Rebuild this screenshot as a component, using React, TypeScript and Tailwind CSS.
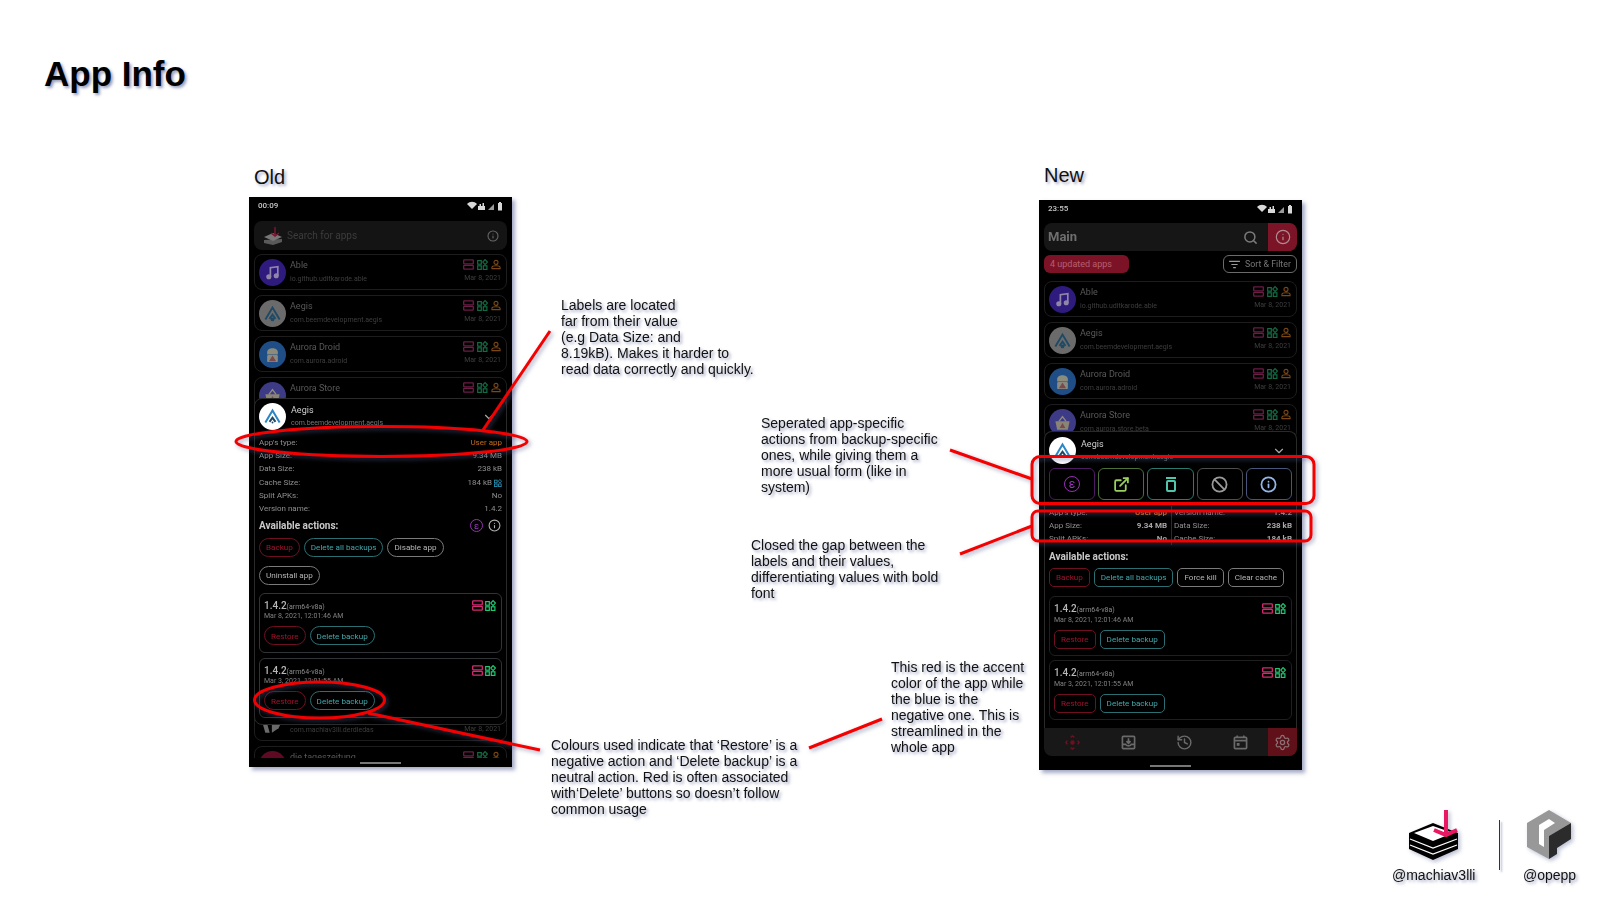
import {ReactNode} from "react";
import {Ban, ChevronDown, ExternalLink, History, Info, Search, Settings} from "lucide-react";

type Tone = "red" | "teal" | "gray";

const toneClass: Record<Tone, string> = {
  red: "border-[#6e1022] text-[#a3122e]",
  teal: "border-[#2b6f73] text-[#45a7ab]",
  gray: "border-[#7a7a7a] text-[#b5b5b5]",
};

function Storage({className}: {className: string}) {
  return (
    <svg viewBox="0 0 11 11" className={`w-[11px] h-[11px] ${className}`} fill="none" stroke="currentColor" strokeWidth="1.3">
      <rect x="0.7" y="0.9" width="9.6" height="3.9" rx="0.6" />
      <rect x="0.7" y="6.3" width="9.6" height="3.9" rx="0.6" />
    </svg>
  );
}

function Apps({className, size = "w-[11px] h-[11px]"}: {className: string; size?: string}) {
  return (
    <svg viewBox="0 0 11 11" className={`${size} ${className}`} fill="none" stroke="currentColor" strokeWidth="1.2">
      <rect x="0.7" y="1.6" width="3.6" height="3.6" />
      <rect x="0.7" y="6.8" width="3.6" height="3.6" />
      <rect x="6.3" y="6.8" width="3.6" height="3.6" />
      <path d="M8.1 0.6 L10.4 3.1 L8.1 5.6 L5.8 3.1 Z" />
    </svg>
  );
}

function Person({className}: {className: string}) {
  return (
    <svg viewBox="0 0 11 11" className={`w-[10px] h-[11px] ${className}`} fill="none" stroke="currentColor" strokeWidth="1.2">
      <circle cx="5.5" cy="3.2" r="2.2" />
      <path d="M1 10 V8.8 C1 7.4 3.5 6.9 5.5 6.9 C7.5 6.9 10 7.4 10 8.8 V10 Z" />
    </svg>
  );
}

function StatusBar({time}: {time: string}) {
  return (
    <div className="h-[16px] pt-[2px] px-[9px] flex items-center justify-between shrink-0">
      <span className="text-[8px] font-medium text-[#c8c8c8]">{time}</span>
      <svg viewBox="0 0 36 10" className="w-[36px] h-[10px]" fill="#d8d8d8">
        <path d="M0 3 C3 0 7 0 10 3 L5 8 Z" />
        <path d="M11 9 V5 H12.5 V3 H14 V5 H15.5 V2 H17 V5 H18 V9 Z" />
        <path d="M21 9 L27 3 V9 Z" fill="#9a9a9a" />
        <path d="M31 2 H32 V1 H34 V2 H35 V9.5 H31 Z" />
      </svg>
    </div>
  );
}

function AppIcon({kind}: {kind: string}) {
  if (kind === "able") {
    return (
      <div className="w-[27px] h-[27px] rounded-full bg-[#2f1a7e] flex items-center justify-center shrink-0">
        <svg viewBox="0 0 16 16" className="w-[17px] h-[17px]" fill="none" stroke="#8f86a8" strokeWidth="1.6">
          <path d="M6 12 V3.5 L13 2.5 V11" />
          <circle cx="4.5" cy="12" r="1.6" fill="#8f86a8" />
          <circle cx="11.5" cy="11" r="1.6" fill="#8f86a8" />
        </svg>
      </div>
    );
  }
  if (kind === "aegis") {
    return (
      <div className="w-[27px] h-[27px] rounded-full bg-[#6b6b6b] flex items-center justify-center shrink-0">
        <svg viewBox="0 0 16 16" className="w-[19px] h-[19px]" fill="none" stroke="#1f4a66" strokeWidth="1.6">
          <path d="M2 13 L8 3 L14 13" />
          <path d="M5.5 12.5 L8 9 L10.5 12.5" />
          <circle cx="8" cy="13" r="0.8" fill="#1f4a66" />
        </svg>
      </div>
    );
  }
  if (kind === "droid") {
    return (
      <div className="w-[27px] h-[27px] rounded-full bg-[#1f4d85] flex items-center justify-center shrink-0">
        <svg viewBox="0 0 16 16" className="w-[19px] h-[19px]">
          <path d="M3.5 8 V6 C3.5 1.6 12.5 1.6 12.5 6 V8 Z" fill="#8c8c7c" />
          <rect x="3.5" y="8.4" width="9" height="6" rx="1" fill="#8a8a80" />
          <path d="M8 8.8 L11 13.6 H5 Z" fill="#7a4a4a" />
        </svg>
      </div>
    );
  }
  if (kind === "store") {
    return (
      <div className="w-[27px] h-[27px] rounded-full bg-[#3d3a86] flex items-center justify-center shrink-0">
        <svg viewBox="0 0 16 16" className="w-[19px] h-[19px]">
          <path d="M5 7 L8 3 L11 7" fill="none" stroke="#8d8a80" strokeWidth="1.2" />
          <path d="M2 7 H14 L12.5 14 H3.5 Z" fill="#8a8474" />
          <path d="M8 8.4 L10.4 12.6 H5.6 Z" fill="#7a4a4a" />
        </svg>
      </div>
    );
  }
  if (kind === "tag") {
    return <div className="w-[27px] h-[27px] rounded-full bg-[#5e0a22] shrink-0" />;
  }
  return (
    <div className="w-[27px] h-[27px] flex items-end justify-center pb-[3px] shrink-0">
      <svg viewBox="0 0 20 16" className="w-[22px] h-[18px]" fill="#6a6a6a">
        <path d="M1 8 L5 8 L7 15 L3 15 Z" />
        <path d="M9 15 L9 6 L19 3 L15 11 Z" />
      </svg>
    </div>
  );
}

function AppRow({name, pkg, kind, date = "Mar 8, 2021"}: {name: string; pkg: string; kind: string; date?: string}) {
  return (
    <div className="h-[36px] mx-[5px] mb-[5px] pl-[4px] pr-[5px] shrink-0 flex items-center gap-[4px] rounded-lg border border-[#1d1d1d]">
      <AppIcon kind={kind} />
      <div className="flex-1 min-w-0 flex flex-col gap-[5px] pb-[1px]">
        <span className="text-[9px] leading-[10px] text-[#595959]">{name}</span>
        <span className="text-[7px] leading-[9px] text-[#3e3e3e]">{pkg}</span>
      </div>
      <div className="flex flex-col items-end gap-[4px] pb-[2px]">
        <div className="flex items-center gap-[3px]">
          <Storage className="text-[#6b1d45]" />
          <Apps className="text-[#126b42]" />
          <Person className="text-[#7a4715]" />
        </div>
        <span className="text-[7px] leading-[9px] text-[#3e3e3e]">{date}</span>
      </div>
    </div>
  );
}

function Pill({tone, square, children}: {tone: Tone; square?: boolean; children: ReactNode}) {
  return (
    <span className={`h-[19px] px-[6px] flex items-center border text-[8.1px] leading-none whitespace-nowrap ${square ? "rounded-[5px]" : "rounded-full"} ${toneClass[tone]}`}>
      {children}
    </span>
  );
}

function SheetHeader() {
  return (
    <div className="flex items-center gap-[5px]">
      <div className="w-[27px] h-[27px] rounded-full bg-white flex items-center justify-center shrink-0">
        <svg viewBox="0 0 16 16" className="w-[19px] h-[19px]" fill="none" stroke="#2a86c4" strokeWidth="1.7">
          <path d="M2 13 L8 3 L14 13" />
          <path d="M5.5 12.5 L8 9 L10.5 12.5" stroke="#1f4a66" />
          <circle cx="8" cy="13" r="0.8" fill="#1f4a66" stroke="none" />
        </svg>
      </div>
      <div className="flex-1 flex flex-col gap-[4px]">
        <span className="text-[9px] leading-[10px] text-[#d0d0d0]">Aegis</span>
        <span className="text-[7px] leading-[9px] text-[#777777]">com.beemdevelopment.aegis</span>
      </div>
      <ChevronDown className="w-[14px] h-[14px] text-[#aaaaaa] mr-[6px]" strokeWidth={2} />
    </div>
  );
}

function BackupCard({date, shape, border}: {date: string; shape: boolean; border: string}) {
  return (
    <div className={`h-[60px] rounded-md border px-[4px] pt-[6px] ${border}`}>
      <div className="flex justify-between items-start">
        <div className="flex items-baseline">
          <span className="text-[10px] leading-[12px] font-medium text-[#b8b8b8]">1.4.2</span>
          <span className="text-[7px] text-[#8a8a8a]">(arm64-v8a)</span>
        </div>
        <div className="flex gap-[2px] pr-[1px]">
          <Storage className="text-[#d12c72]" />
          <Apps className="text-[#1fc770]" />
        </div>
      </div>
      <div className="text-[7px] leading-[9px] text-[#808080]">{date}</div>
      <div className="flex gap-[4px] mt-[5px]">
        <Pill tone="red" square={shape}>Restore</Pill>
        <Pill tone="teal" square={shape}>Delete backup</Pill>
      </div>
    </div>
  );
}

function InfoRow({label, value, valueClass, height}: {label: string; value: ReactNode; valueClass: string; height: string}) {
  return (
    <div className={`flex justify-between items-center text-[8px] ${height}`}>
      <span className="text-[#8f8f8f]">{label}</span>
      <span className={valueClass}>{value}</span>
    </div>
  );
}

function OldPhone() {
  const rowH = "h-[13.3px]";
  return (
    <div className="absolute left-[249px] top-[197px] w-[263px] h-[570px] bg-black flex flex-col shadow-[3px_3px_4px_rgba(90,100,150,0.55)] font-['Roboto',sans-serif] blur-[0.4px]">
      <StatusBar time="00:09" />
      <div className="h-[29px] mx-[5px] mt-[8px] mb-[4px] pl-[9px] pr-[8px] shrink-0 flex items-center gap-[4px] rounded-lg bg-[#141414]">
        <svg viewBox="0 0 20 18" className="w-[20px] h-[18px]" fill="none">
          <path d="M1 13 V16 L10 18 L19 15 V12 Z" fill="#5a5a5a" />
          <path d="M1 10 L10 6 L19 10 L10 14 Z" fill="#777777" />
          <path d="M12 0 V8 M8 6 L12 9 L16 6" stroke="#7a1530" strokeWidth="1.5" />
        </svg>
        <span className="flex-1 text-[10px] text-[#3c3c3c]">Search for apps</span>
        <Info className="w-[12px] h-[12px] text-[#666666]" strokeWidth={2.2} />
      </div>
      <div className="flex-1 overflow-hidden flex flex-col">
        <AppRow name="Able" pkg="io.github.uditkarode.able" kind="able" />
        <AppRow name="Aegis" pkg="com.beemdevelopment.aegis" kind="aegis" />
        <AppRow name="Aurora Droid" pkg="com.aurora.adroid" kind="droid" />
        <AppRow name="Aurora Store" pkg="com.aurora.store.beta" kind="store" />
        <div className="h-[287px] shrink-0" />
        <AppRow name="Der Die Das" pkg="com.machiav3lli.derdiedas" kind="das" />
        <AppRow name="die tageszeitung" pkg="de.taz.app.android" kind="tag" />
      </div>
      <div className="h-[9px] flex items-end justify-center pb-[3px] shrink-0">
        <div className="w-[41px] h-[2px] bg-[#777777]" />
      </div>
      <div className="absolute left-[5px] right-[5px] top-[201px] h-[327px] px-[4px] pt-[4px] bg-black border border-[#2a2a2a] rounded-lg">
        <SheetHeader />
        <div className="mt-[6px]">
          <InfoRow height={rowH} label="App's type:" value="User app" valueClass="text-[#c56a1c]" />
          <InfoRow height={rowH} label="App Size:" value="9.34 MB" valueClass="text-[#8f8f8f]" />
          <InfoRow height={rowH} label="Data Size:" value="238 kB" valueClass="text-[#8f8f8f]" />
          <InfoRow
            height={rowH}
            label="Cache Size:"
            value={<span className="flex items-center gap-[2px]">184 kB<Apps className="text-[#2a8fb0]" size="w-[8px] h-[8px]" /></span>}
            valueClass="text-[#8f8f8f]"
          />
          <InfoRow height={rowH} label="Split APKs:" value="No" valueClass="text-[#8f8f8f]" />
          <InfoRow height={rowH} label="Version name:" value="1.4.2" valueClass="text-[#8f8f8f]" />
        </div>
        <div className="flex items-center mt-[3px] h-[14px]">
          <span className="flex-1 text-[10px] font-bold text-[#c8c8c8]">Available actions:</span>
          <span className="w-[13px] h-[13px] rounded-full border border-[#9a2fb8] flex items-center justify-center text-[9.5px] leading-none text-[#a032c0] mr-[5px]">ε</span>
          <Info className="w-[13px] h-[13px] text-[#b0b0b0] mr-[1px]" strokeWidth={2} />
        </div>
        <div className="flex flex-wrap gap-x-[4px] gap-y-[9px] mt-[5px]">
          <Pill tone="red">Backup</Pill>
          <Pill tone="teal">Delete all backups</Pill>
          <Pill tone="gray">Disable app</Pill>
          <Pill tone="gray">Uninstall app</Pill>
        </div>
        <div className="flex flex-col gap-[5px] mt-[8px]">
          <BackupCard date="Mar 8, 2021, 12:01:46 AM" shape={false} border="border-[#303338]" />
          <BackupCard date="Mar 3, 2021, 12:01:55 AM" shape={false} border="border-[#303338]" />
        </div>
      </div>
    </div>
  );
}

function ActionButton({border, children}: {border: string; children: ReactNode}) {
  return <div className={`flex-1 h-[32px] rounded-md border flex items-center justify-center ${border}`}>{children}</div>;
}

function NewPhone() {
  const rowH = "h-[13px]";
  return (
    <div className="absolute left-[1039px] top-[200px] w-[263px] h-[570px] bg-black flex flex-col shadow-[3px_3px_4px_rgba(90,100,150,0.55)] font-['Roboto',sans-serif] blur-[0.4px]">
      <StatusBar time="23:55" />
      <div className="h-[28px] mx-[5px] mt-[7px] pl-[4px] shrink-0 flex items-center rounded-lg bg-[#161616] overflow-hidden">
        <span className="flex-1 text-[13px] font-bold text-[#6f6f6f]">Main</span>
        <Search className="w-[15px] h-[15px] text-[#7a7a7a] mr-[10px]" strokeWidth={2.4} />
        <div className="w-[29px] h-full bg-[#7a1426] flex items-center justify-center">
          <Info className="w-[16px] h-[16px] text-[#b08a8e]" strokeWidth={1.8} />
        </div>
      </div>
      <div className="h-[18px] mx-[5px] mt-[4px] shrink-0 flex justify-between">
        <div className="w-[85px] pt-[1px] rounded-md bg-[#7c1226] flex items-center pl-[6px] text-[9px] text-[#b5606e]">4 updated apps</div>
        <div className="w-[74px] pt-[1px] rounded-md border border-[#6b6b6b] flex items-center justify-center gap-[5px] text-[8.8px] text-[#777777]">
          <svg viewBox="0 0 12 10" className="w-[11px] h-[9px]" stroke="#9a9a9a" strokeWidth="1.2">
            <path d="M0 1.5 H12 M2.5 5 H9.5 M4.5 8.5 H7.5" />
          </svg>
          Sort &amp; Filter
        </div>
      </div>
      <div className="flex-1 overflow-hidden flex flex-col pt-[8px]">
        <AppRow name="Able" pkg="io.github.uditkarode.able" kind="able" />
        <AppRow name="Aegis" pkg="com.beemdevelopment.aegis" kind="aegis" />
        <AppRow name="Aurora Droid" pkg="com.aurora.adroid" kind="droid" />
        <AppRow name="Aurora Store" pkg="com.aurora.store.beta" kind="store" />
      </div>
      <div className="h-[28px] mx-[5px] shrink-0 flex items-center rounded-b-lg bg-[#181818] overflow-hidden">
        <div className="flex-1 flex justify-center">
          <svg viewBox="0 0 16 16" className="w-[15px] h-[15px]" fill="none" stroke="#6e1022" strokeWidth="1.6">
            <circle cx="8" cy="8" r="1.6" fill="#6e1022" />
            <path d="M6 2.5 L8 1 L10 2.5 M6 13.5 L8 15 L10 13.5 M2.5 6 L1 8 L2.5 10 M13.5 6 L15 8 L13.5 10" />
          </svg>
        </div>
        <div className="flex-1 flex justify-center">
          <svg viewBox="0 0 16 16" className="w-[15px] h-[15px]" fill="none" stroke="#6a6a6a" strokeWidth="1.8">
            <rect x="1.5" y="1.5" width="13" height="13" rx="1" />
            <path d="M1.5 10 H5 C5.5 12 10.5 12 11 10 H14.5 M8 3.5 V8.5 M5.8 6.5 L8 8.8 L10.2 6.5" />
          </svg>
        </div>
        <div className="flex-1 flex justify-center">
          <History className="w-[17px] h-[17px] text-[#6a6a6a]" strokeWidth={2} />
        </div>
        <div className="flex-1 flex justify-center">
          <svg viewBox="0 0 16 16" className="w-[15px] h-[15px]" fill="none" stroke="#6a6a6a" strokeWidth="1.8">
            <rect x="1.5" y="2.5" width="13" height="12" rx="1" />
            <path d="M1.5 6 H14.5 M4.5 0.5 V3 M11.5 0.5 V3" />
            <rect x="4" y="8.5" width="3" height="3" fill="#6a6a6a" stroke="none" />
          </svg>
        </div>
        <div className="w-[29px] h-full bg-[#5f1019] flex items-center justify-center">
          <Settings className="w-[17px] h-[17px] text-[#8a7074]" strokeWidth={1.8} />
        </div>
      </div>
      <div className="h-[14px] flex items-end justify-center pb-[3px] shrink-0">
        <div className="w-[41px] h-[2px] bg-[#777777]" />
      </div>
      <div className="absolute left-[5px] right-[5px] top-[231px] h-[297px] px-[4px] pt-[5px] bg-black border border-b-0 border-[#2a2a2a] rounded-t-lg">
        <SheetHeader />
        <div className="flex gap-[3px] mt-[4px]">
          <ActionButton border="border-[#4e1b63]">
            <span className="w-[16px] h-[16px] rounded-full border-[1.5px] border-[#9a2fb8] flex items-center justify-center text-[12px] leading-none text-[#a032c0]">ε</span>
          </ActionButton>
          <ActionButton border="border-[#4c7038]">
            <ExternalLink className="w-[17px] h-[17px] text-[#9ad05e]" strokeWidth={2.5} />
          </ActionButton>
          <ActionButton border="border-[#2b7a70]">
            <svg viewBox="0 0 12 16" className="w-[12px] h-[16px]" fill="none" stroke="#52c4ac" strokeWidth="2">
              <path d="M1 2 H11" />
              <rect x="2" y="5" width="8" height="10" rx="1" />
            </svg>
          </ActionButton>
          <ActionButton border="border-[#4e4e4e]">
            <Ban className="w-[17px] h-[17px] text-[#9a9a9a]" strokeWidth={2.5} />
          </ActionButton>
          <ActionButton border="border-[#47567a]">
            <Info className="w-[17px] h-[17px] text-[#93b5e8]" strokeWidth={2.5} />
          </ActionButton>
        </div>
        <div className="grid grid-cols-2 gap-x-[7px] mt-[6px] relative">
          <div className="absolute left-1/2 top-0 bottom-0 w-px bg-[#2a2a2a]" />
          <InfoRow height={rowH} label="App's type:" value="User app" valueClass="font-bold text-[#c56a1c]" />
          <InfoRow height={rowH} label="Version name:" value="1.4.2" valueClass="font-bold text-[#8f8f8f]" />
          <InfoRow height={rowH} label="App Size:" value="9.34 MB" valueClass="font-bold text-[#a8a8a8]" />
          <InfoRow height={rowH} label="Data Size:" value="238 kB" valueClass="font-bold text-[#a8a8a8]" />
          <InfoRow height={rowH} label="Split APKs:" value="No" valueClass="font-bold text-[#a8a8a8]" />
          <InfoRow height={rowH} label="Cache Size:" value="184 kB" valueClass="font-bold text-[#a8a8a8]" />
        </div>
        <div className="text-[10px] leading-[14px] font-bold text-[#c8c8c8] mt-[5px]">Available actions:</div>
        <div className="flex gap-[4px] mt-[4px]">
          <Pill tone="red" square>Backup</Pill>
          <Pill tone="teal" square>Delete all backups</Pill>
          <Pill tone="gray" square>Force kill</Pill>
          <Pill tone="gray" square>Clear cache</Pill>
        </div>
        <div className="flex flex-col gap-[4px] mt-[9px]">
          <BackupCard date="Mar 8, 2021, 12:01:46 AM" shape border="border-[#1f1f1f]" />
          <BackupCard date="Mar 3, 2021, 12:01:55 AM" shape border="border-[#1f1f1f]" />
        </div>
      </div>
    </div>
  );
}

function Note({className, lines}: {className: string; lines: string[]}) {
  return (
    <div className={`absolute text-[14px] leading-[16px] text-[#111111] whitespace-nowrap [text-shadow:2px_2px_3px_rgba(80,90,140,0.55)] ${className}`}>
      {lines.map((line) => (
        <div key={line}>{line}</div>
      ))}
    </div>
  );
}

export default function App() {
  return (
    <div className="relative w-[1611px] h-[911px] bg-white overflow-hidden font-['Liberation_Sans',Arial,sans-serif]">
      <h1 className="absolute left-[44px] top-[54px] text-[35px] leading-[40px] font-bold text-black [text-shadow:2px_2px_3px_rgba(80,90,140,0.6)]">App Info</h1>
      <div className="absolute left-[254px] top-[165px] text-[20px] leading-[24px] text-[#111111] [text-shadow:2px_2px_3px_rgba(80,90,140,0.5)]">Old</div>
      <div className="absolute left-[1044px] top-[163px] text-[20px] leading-[24px] text-[#111111] [text-shadow:2px_2px_3px_rgba(80,90,140,0.5)]">New</div>

      <OldPhone />
      <NewPhone />

      <svg viewBox="0 0 1611 911" className="absolute inset-0 w-[1611px] h-[911px] pointer-events-none drop-shadow-[2px_2px_2px_rgba(80,90,140,0.5)]" fill="none" stroke="#f50000" strokeWidth="3">
        <ellipse cx="381.5" cy="441.5" rx="145.5" ry="15" />
        <ellipse cx="319.5" cy="700" rx="65" ry="18" />
        <path d="M550 331 L483 430" />
        <path d="M368 713 L540 750" />
        <path d="M809 748 L882 719" />
        <path d="M950 450 L1032 479" />
        <path d="M960 554 L1032 526" />
        <rect x="1032" y="456.5" width="282" height="47" rx="8" />
        <rect x="1032" y="511" width="279" height="30" rx="6" />
      </svg>

      <Note className="left-[561px] top-[297px]" lines={["Labels are located", "far from their value", "(e.g Data Size: and", "8.19kB). Makes it harder to", "read data correctly and quickly."]} />
      <Note className="left-[761px] top-[415px]" lines={["Seperated app-specific", "actions from backup-specific", "ones, while giving them a", "more usual form (like in", "system)"]} />
      <Note className="left-[751px] top-[537px]" lines={["Closed the gap between the", "labels and their values,", "differentiating values with bold", "font"]} />
      <Note className="left-[551px] top-[737px]" lines={["Colours used indicate that ‘Restore’ is a", "negative action and ‘Delete backup’ is a", "neutral action. Red is often associated", "with‘Delete’ buttons so doesn’t follow", "common usage"]} />
      <Note className="left-[891px] top-[659px]" lines={["This red is the accent", "color of the app while", "the blue is the", "negative one. This is", "streamlined in the", "whole app"]} />

      <svg viewBox="0 0 50 50" className="absolute left-[1409px] top-[810px] w-[50px] h-[50px] drop-shadow-[2px_2px_2px_rgba(80,90,140,0.4)]">
        <path d="M0 23 L24 13 L49 23 V39 L24 50 L0 39 Z" fill="#000000" />
        <path d="M5 23 L24 16 L44 23 L24 31 Z" fill="#ffffff" />
        <path d="M1 29 L24 38 L48 29 M1 35 L24 44 L48 35" fill="none" stroke="#ffffff" strokeWidth="1.2" />
        <path d="M37 0 V24 M25 20 L37 25 L48 20" fill="none" stroke="#ea1763" strokeWidth="4" />
      </svg>
      <Note className="left-[1392px] top-[867px]" lines={["@machiav3lli"]} />
      <div className="absolute left-[1499px] top-[820px] w-px h-[50px] bg-[#333333] shadow-[2px_2px_2px_rgba(80,90,140,0.5)]" />
      <svg viewBox="0 0 44 49" className="absolute left-[1527px] top-[810px] w-[44px] h-[49px] drop-shadow-[2px_2px_2px_rgba(80,90,140,0.4)]">
        <path d="M0 13 L22 0 L44 13 L22 26 L22 49 L0 37 Z" fill="#989898" />
        <path d="M12 15 L22 9 L28 13 L17 20 L17 37 L12 34 Z" fill="#ffffff" />
        <path d="M44 13 V29 L30 38 V44 L22 49 V26 Z" fill="#2b2b2b" />
      </svg>
      <Note className="left-[1523px] top-[867px]" lines={["@opepp"]} />
    </div>
  );
}
